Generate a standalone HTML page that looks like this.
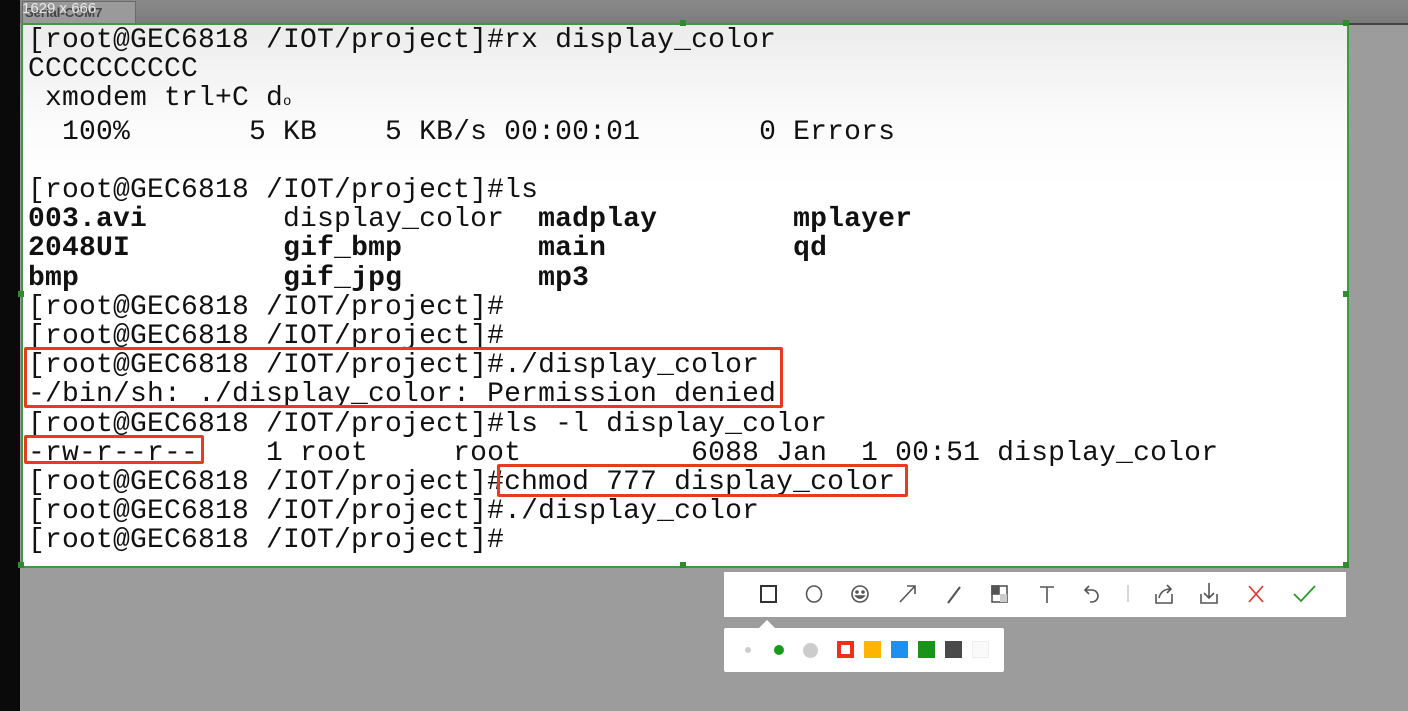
<!DOCTYPE html>
<html><head><style>
body{margin:0;width:1408px;height:711px;overflow:hidden;background:#9c9c9c;position:relative;font-family:"Liberation Sans",sans-serif}
.top{position:absolute;left:0;top:0;width:1408px;height:23px;background:linear-gradient(#8a8a8a,#7c7c7c)}
.left{position:absolute;left:0;top:0;width:20px;height:711px;background:#0a0a0a}
.tab{position:absolute;left:22px;top:1px;width:112px;height:22px;background:#9a9a9a;border:1px solid #6a6a6a;border-bottom:none;font-size:13px;color:#444;font-weight:bold}
.term{position:absolute;left:21px;top:23px;width:1324px;height:541px;background:linear-gradient(#ececec,#fbfbfb 18%,#fff 30%);border:2px solid #3e9a3e;}
pre{position:absolute;left:28px;top:26px;margin:0;font-family:"Liberation Mono","DejaVu Sans Mono",monospace;font-size:28px;letter-spacing:0.2px;line-height:29.2px;color:#111}
b{font-weight:bold}
.box{position:absolute;border:3px solid #e83a1e;border-radius:2px}
.tb{position:absolute;left:724px;top:572px;width:622px;height:45px;background:#fff}
.cp{position:absolute;left:724px;top:628px;width:280px;height:44px;background:#fff;border-radius:2px}
.tri{position:absolute;left:759px;top:620px;width:0;height:0;border-left:8px solid transparent;border-right:8px solid transparent;border-bottom:8px solid #fff}
.sq{position:absolute;top:641px;width:17px;height:17px}
.h{position:absolute;width:6px;height:6px;background:#2e8b2e}
</style></head><body>
<div class="top"></div>
<div class="tab"><span style="position:absolute;left:2px;top:3px">Serial-COM7</span></div>
<div style="position:absolute;left:22px;top:0px;color:#e8e8e8;font-size:15px;">1629 x 666</div>
<div class="left"></div>
<div style="position:absolute;left:1347px;top:23px;width:61px;height:2px;background:#444"></div>
<div class="term"></div>
<div class="h" style="left:1343px;top:20px"></div><div class="h" style="left:680px;top:20px"></div><div class="h" style="left:1343px;top:291px"></div><div class="h" style="left:1343px;top:562px"></div><div class="h" style="left:680px;top:562px"></div><div class="h" style="left:18px;top:562px"></div><div class="h" style="left:18px;top:291px"></div>
<pre>[root@GEC6818 /IOT/project]#rx display_color
CCCCCCCCCC
 xmodem trl+C d<span style="font-size:14px">o</span>
  100%       5 KB    5 KB/s 00:00:01       0 Errors

[root@GEC6818 /IOT/project]#ls
<b>003.avi</b>        display_color  <b>madplay</b>        <b>mplayer</b>
<b>2048UI</b>         <b>gif_bmp</b>        <b>main</b>           <b>qd</b>
<b>bmp</b>            <b>gif_jpg</b>        <b>mp3</b>
[root@GEC6818 /IOT/project]#
[root@GEC6818 /IOT/project]#
[root@GEC6818 /IOT/project]#./display_color
-/bin/sh: ./display_color: Permission denied
[root@GEC6818 /IOT/project]#ls -l display_color
-rw-r--r--    1 root     root          6088 Jan  1 00:51 display_color
[root@GEC6818 /IOT/project]#chmod 777 display_color
[root@GEC6818 /IOT/project]#./display_color
[root@GEC6818 /IOT/project]#</pre>
<div class="box" style="left:24px;top:347px;width:753px;height:55px"></div>
<div class="box" style="left:24px;top:435px;width:174px;height:23px"></div>
<div class="box" style="left:497px;top:464px;width:405px;height:27px"></div>
<div class="tb"></div>
<svg style="position:absolute;left:724px;top:572px" width="622" height="45" fill="none" stroke="#555" stroke-width="1.6">
<rect x="37" y="14" width="15" height="16" stroke="#333" stroke-width="2"/>
<ellipse cx="90" cy="22" rx="7.5" ry="8"/>
<circle cx="136" cy="22" r="8"/><circle cx="133" cy="20" r="1" fill="#555"/><circle cx="139" cy="20" r="1" fill="#555"/><path d="M132 24 q4 4 8 0 z" fill="#555"/>
<path d="M176 30 L191 14 M183 14 H191 V22"/>
<path d="M224 31 L236 15" stroke-width="2.2"/>
<rect x="268" y="14" width="15" height="16"/><rect x="268" y="14" width="7" height="8" fill="#555"/><rect x="276" y="22" width="7" height="8" fill="#ccc" stroke="none"/>
<path d="M316 15 H330 M323 15 V31"/>
<path d="M365 14 L361 18 L365 22 M361 18 H368 a6 6 0 0 1 0 12 H366"/>
<path d="M404 13 V30" stroke="#ccc"/>
<path d="M432 22 V31 H448 V22 M435 26 q2 -9 12 -9 M443 13 L447 17 L443 21"/>
<path d="M477 22 V31 H493 V22 M485 11 V26 M480 21 L485 26 L490 21"/>
<path d="M525 14 L539 30 M539 14 L525 30" stroke="#e8322a"/>
<path d="M570 22 L577 29 L591 14" stroke="#2a9a2a" stroke-width="1.8"/>
</svg>
<div class="tri"></div>
<div class="cp"></div>
<div style="position:absolute;left:745px;top:647px;width:6px;height:6px;border-radius:50%;background:#ccc"></div>
<div style="position:absolute;left:774px;top:645px;width:10px;height:10px;border-radius:50%;background:#1a9a1a"></div>
<div style="position:absolute;left:803px;top:643px;width:15px;height:15px;border-radius:50%;background:#ccc"></div>
<div class="sq" style="left:837px;box-sizing:border-box;border:4px solid #f0301a;background:#fff"></div>
<div class="sq" style="left:864px;background:#fdb600"></div>
<div class="sq" style="left:891px;background:#1e90f0"></div>
<div class="sq" style="left:918px;background:#1a931a"></div>
<div class="sq" style="left:945px;background:#4a4a4a"></div>
<div class="sq" style="left:972px;background:#fafafa;box-sizing:border-box;border:1px solid #eee"></div>
</body></html>
